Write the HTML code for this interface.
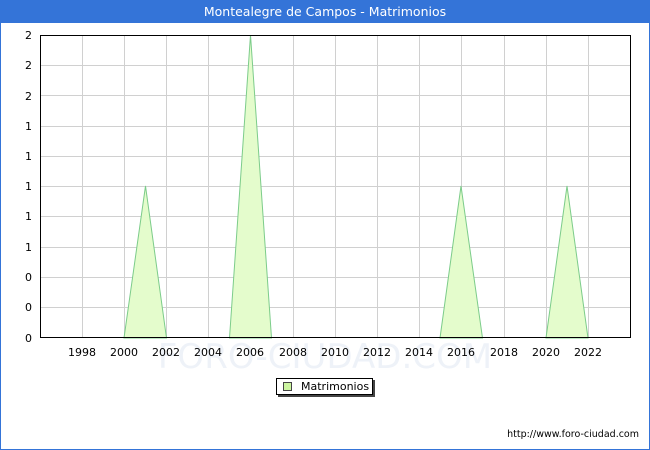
<!DOCTYPE html>
<html><head><style>
body{margin:0;width:650px;height:450px;overflow:hidden;font-family:"DejaVu Sans","Liberation Sans",sans-serif;}
</style></head><body>
<svg width="650" height="450" xmlns="http://www.w3.org/2000/svg" style="display:block">
<rect x="0.5" y="0.5" width="649" height="449" fill="#fff" stroke="#3474d8"/>
<rect x="0" y="0" width="650" height="23" fill="#3474d8"/>
<text x="325" y="16" fill="#fff" font-size="12.5" text-anchor="middle" font-family="DejaVu Sans, sans-serif">Montealegre de Campos - Matrimonios</text>
<text x="325" y="368" fill="#eef2f8" font-size="34" text-anchor="middle" font-family="DejaVu Sans, sans-serif">FORO-CIUDAD.COM</text>
<g stroke="#d0d0d0" stroke-width="1">
<line x1="40" x2="630" y1="65.5" y2="65.5"/><line x1="40" x2="630" y1="95.5" y2="95.5"/><line x1="40" x2="630" y1="126.5" y2="126.5"/><line x1="40" x2="630" y1="156.5" y2="156.5"/><line x1="40" x2="630" y1="186.5" y2="186.5"/><line x1="40" x2="630" y1="216.5" y2="216.5"/><line x1="40" x2="630" y1="247.5" y2="247.5"/><line x1="40" x2="630" y1="277.5" y2="277.5"/><line x1="40" x2="630" y1="307.5" y2="307.5"/>
<line y1="35" y2="338" x1="82.5" x2="82.5"/><line y1="35" y2="338" x1="124.5" x2="124.5"/><line y1="35" y2="338" x1="166.5" x2="166.5"/><line y1="35" y2="338" x1="208.5" x2="208.5"/><line y1="35" y2="338" x1="250.5" x2="250.5"/><line y1="35" y2="338" x1="293.5" x2="293.5"/><line y1="35" y2="338" x1="335.5" x2="335.5"/><line y1="35" y2="338" x1="377.5" x2="377.5"/><line y1="35" y2="338" x1="419.5" x2="419.5"/><line y1="35" y2="338" x1="461.5" x2="461.5"/><line y1="35" y2="338" x1="504.5" x2="504.5"/><line y1="35" y2="338" x1="546.5" x2="546.5"/><line y1="35" y2="338" x1="588.5" x2="588.5"/>
</g>
<g fill="#e4fccc" stroke="#7ccc8a" stroke-width="1">
<polygon points="124,338 145.5,186 166.5,338"/>
<polygon points="229.5,338 250.5,35 271.5,338"/>
<polygon points="440,338 461,186 482.5,338"/>
<polygon points="546,338 567,186 588,338"/>
</g>
<rect x="40.5" y="35.5" width="590" height="302" fill="none" stroke="#000"/>
<g font-size="11" fill="#000" text-anchor="end">
<text x="32" y="39">2</text><text x="32" y="69">2</text><text x="32" y="100">2</text><text x="32" y="130">1</text><text x="32" y="160">1</text><text x="32" y="190">1</text><text x="32" y="220">1</text><text x="32" y="251">1</text><text x="32" y="281">0</text><text x="32" y="311">0</text><text x="32" y="342">0</text>
</g>
<g font-size="11" fill="#000" text-anchor="middle">
<text x="82" y="356">1998</text><text x="124" y="356">2000</text><text x="166" y="356">2002</text><text x="208" y="356">2004</text><text x="250" y="356">2006</text><text x="293" y="356">2008</text><text x="335" y="356">2010</text><text x="377" y="356">2012</text><text x="419" y="356">2014</text><text x="461" y="356">2016</text><text x="504" y="356">2018</text><text x="546" y="356">2020</text><text x="588" y="356">2022</text>
</g>
<rect x="278" y="380" width="97" height="17" fill="#444"/>
<rect x="276.5" y="378.5" width="96" height="16" fill="#fff" stroke="#000"/>
<rect x="283.5" y="382.5" width="8" height="8" fill="#ccf5a0" stroke="#444"/>
<text x="301" y="390" font-size="11">Matrimonios</text>
<text x="639" y="437" font-size="9.5" text-anchor="end">http://www.foro-ciudad.com</text>
</svg>
</body></html>
